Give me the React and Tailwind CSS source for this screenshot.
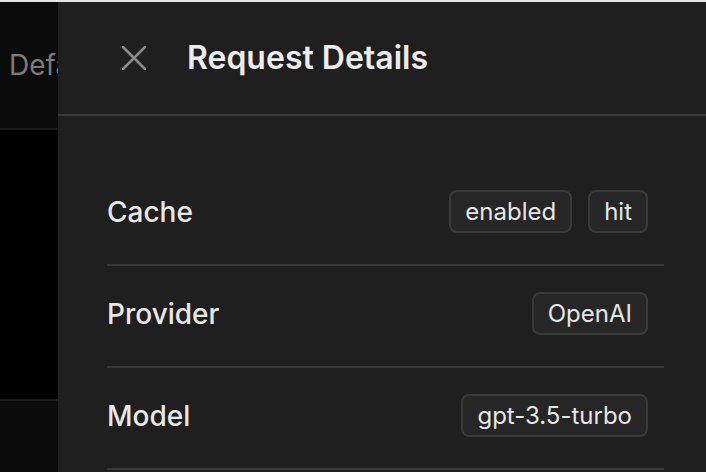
const rows = [
  { label: "Cache", tags: ["enabled", "hit"] },
  { label: "Provider", tags: ["OpenAI"] },
  { label: "Model", tags: ["gpt-3.5-turbo"] },
];

function Tag({ children }) {
  return (
    <span className="h-[43px] px-[14px] flex items-center rounded-lg border-2 border-[#3a3a3a] bg-[#262626] text-[24px] text-[#e6e6e6] leading-none">
      {children}
    </span>
  );
}

export default function App() {
  return (
    <div
      className="w-[706px] h-[472px] flex flex-col overflow-hidden bg-[#0b0b0b]"
      style={{ fontFamily: "Inter, 'Noto Sans', sans-serif" }}
    >
      <div className="h-[2px] bg-[#e4e4e4]" />
      <div className="flex flex-1 min-h-0">
        <div className="w-[58px] flex flex-col overflow-hidden">
          <div className="h-[128px] shrink-0 border-b-2 border-[#1c1c1c] bg-[#0b0b0b] flex items-center pl-[9px] whitespace-nowrap text-[28px] text-[#7c7c7c]">
            Default
          </div>
          <div className="h-[271px] shrink-0 border-b-2 border-[#1c1c1c] bg-black" />
          <div className="flex-1 bg-[#0b0b0b]" />
        </div>

        <div className="flex-1 bg-[#1f1f1f] flex flex-col">
          <div className="h-[114px] shrink-0 border-b-2 border-[#383838] flex items-center pl-[64px]">
            <svg width="24" height="24" viewBox="0 0 24 24" className="shrink-0">
              <path d="M1 1L23 23M23 1L1 23" stroke="#8a8a8a" strokeWidth="2.5" strokeLinecap="round" />
            </svg>
            <h2 className="ml-[41px] text-[32px] font-semibold text-[#ececec] leading-none">
              Request Details
            </h2>
          </div>

          <div className="pt-[48px] pl-[49px] pr-[42px]">
            {rows.map((row) => (
              <div
                key={row.label}
                className="h-[102px] border-b-2 border-[#383838] flex items-center justify-between pb-[5px] pr-[16px]"
              >
                <span className="text-[28px] font-medium text-[#e8e8e8]">{row.label}</span>
                <div className="flex gap-4">
                  {row.tags.map((t) => (
                    <Tag key={t}>{t}</Tag>
                  ))}
                </div>
              </div>
            ))}
          </div>
        </div>
      </div>
    </div>
  );
}
